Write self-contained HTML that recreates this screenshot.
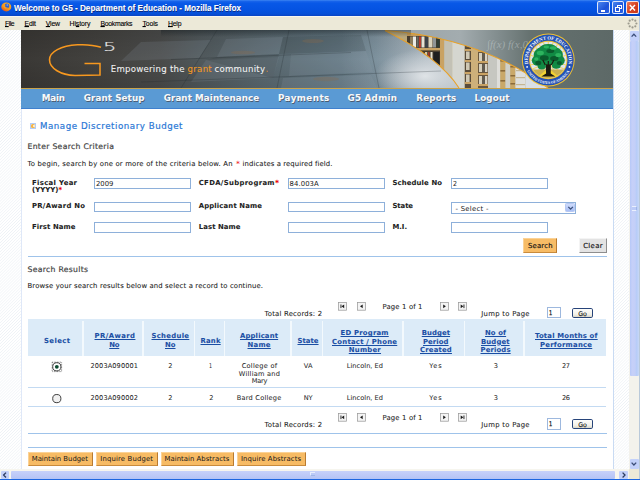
<!DOCTYPE html>
<html>
<head>
<meta charset="utf-8">
<title>Welcome to G5 - Department of Education</title>
<style>
html,body{margin:0;padding:0;}
body{width:640px;height:480px;overflow:hidden;position:relative;background:#fff;font-family:"DejaVu Sans","Liberation Sans",sans-serif;font-size:7px;color:#222;}
.a{position:absolute;box-sizing:border-box;}
.t{position:absolute;white-space:nowrap;line-height:1;color:#222;-webkit-text-stroke:0.08px currentColor;}
#titlebar{left:0;top:0;width:640px;height:16px;background:linear-gradient(#3d85f2 0,#1763ea 9%,#0858e7 20%,#0553e2 60%,#0650d8 85%,#0a45c4 100%);}
#menubar{left:0;top:15.5px;width:640px;height:14.5px;background:#ece9d8;border-top:0.5px solid #f8f6ee;}
#page{left:0;top:30px;width:630px;height:440px;background:#f8fafc repeating-linear-gradient(135deg,#ffffff 0,#ffffff 0.9px,#eef2f6 1.5px,#ffffff 2.1px);}
#content{left:20.5px;top:30px;width:593.5px;height:440px;background:#fff;border-left:1px solid #dfe8f8;border-right:1px solid #c9dbf3;}
#nav{left:21px;top:88.5px;width:592px;height:20.3px;background:#5a9ad4;border-bottom:1.2px solid #3f80ce;}
#gold{left:21px;top:87.6px;width:592px;height:1px;background:#c9a24a;}
.inp{position:absolute;box-sizing:border-box;border:1px solid #8fb0d8;background:#fff;}
.hl{position:absolute;height:1px;background:#a9c9ec;left:27.5px;width:579.5px;}
.wb{position:absolute;box-sizing:border-box;top:1.2px;height:13px;width:12.4px;border-radius:2px;border:0.8px solid rgba(255,255,255,.85);}
</style>
</head>
<body>
<div class="a" id="titlebar"></div>
<div class="a" id="menubar"></div>
<div class="a" id="page"></div>
<div class="a" id="content"></div>
<svg class="a" style="left:21px;top:30px" width="592" height="58" viewBox="0 0 592 58">
<defs>
<linearGradient id="bg1" x1="0" y1="0" x2="1" y2="0">
<stop offset="0" stop-color="#3a3835"/><stop offset="0.13" stop-color="#43423f"/><stop offset="0.235" stop-color="#4a4b4a"/><stop offset="0.30" stop-color="#50585b"/><stop offset="0.40" stop-color="#5a686f"/><stop offset="0.50" stop-color="#62757f"/><stop offset="0.60" stop-color="#6f8592"/><stop offset="0.66" stop-color="#8898a3"/><stop offset="0.71" stop-color="#a3aeb6"/><stop offset="1" stop-color="#a3aeb6"/>
</linearGradient>
<linearGradient id="bgv" x1="0" y1="0" x2="0" y2="1">
<stop offset="0" stop-color="#000" stop-opacity="0.12"/><stop offset="0.5" stop-color="#000" stop-opacity="0"/><stop offset="1" stop-color="#000" stop-opacity="0.1"/>
</linearGradient>
<linearGradient id="chalk" gradientUnits="userSpaceOnUse" x1="364" y1="0" x2="592" y2="0">
<stop offset="0" stop-color="#98a2a7"/><stop offset="0.33" stop-color="#a3acaf"/><stop offset="0.5" stop-color="#818c8d"/><stop offset="0.64" stop-color="#65716f"/><stop offset="1" stop-color="#5d6967"/></linearGradient>
<linearGradient id="sheen" gradientUnits="userSpaceOnUse" x1="320" y1="0" x2="445" y2="0"><stop offset="0" stop-color="#dfe5ea" stop-opacity="0"/><stop offset="0.6" stop-color="#dfe5ea" stop-opacity="0.28"/><stop offset="1" stop-color="#e6eaee" stop-opacity="0.5"/></linearGradient>
<radialGradient id="glow" cx="0.5" cy="0.5" r="0.5"><stop offset="0" stop-color="#e2e6e9" stop-opacity="0.95"/><stop offset="0.35" stop-color="#d8dde1" stop-opacity="0.7"/><stop offset="1" stop-color="#d5dade" stop-opacity="0"/></radialGradient>
<clipPath id="wedge"><path d="M364,0.5 Q419,28 438,58 L527,58 Q459,7.25 364,0.5 Z"/></clipPath>
</defs>
<rect width="592" height="58" fill="url(#bg1)"/>
<rect width="592" height="58" fill="url(#bgv)"/>
<rect x="320" y="0" width="130" height="58" fill="url(#sheen)"/>
<!-- chalkboard right -->
<path d="M364,0 L592,0 L592,58 L527,58 Q459,7.25 364,0.5 Z" fill="url(#chalk)"/>
<ellipse cx="404" cy="46" rx="50" ry="27" fill="url(#glow)"/>
<!-- wedge with shelves -->
<g clip-path="url(#wedge)">
<rect x="360" y="0" width="170" height="58" fill="#b9a77a"/>
<rect x="386" y="3" width="34" height="40" fill="#463c2e"/>
<rect x="389" y="6.5" width="3" height="11" fill="#8a7a5a"/>
<rect x="392" y="6.5" width="3" height="11" fill="#ecebe4"/>
<rect x="395.5" y="6.5" width="2" height="11" fill="#6a6a66"/>
<rect x="398" y="6.5" width="2" height="11" fill="#b5392a"/>
<rect x="400.5" y="6.5" width="3" height="11" fill="#e6e2d6"/>
<rect x="404" y="6.5" width="3" height="11" fill="#3d4148"/>
<rect x="407.5" y="6.5" width="4" height="11" fill="#d9d2bd"/>
<rect x="412" y="6.5" width="3" height="11" fill="#8f9496"/>
<rect x="415.5" y="6.5" width="3" height="11" fill="#2f3b34"/>
<rect x="386" y="3" width="34" height="3" fill="#c49a58"/>
<rect x="386" y="18" width="34" height="2.4" fill="#c9a263"/>
<rect x="398" y="22" width="5" height="13" fill="#2a2620"/>
<rect x="404" y="22" width="2.2" height="13" fill="#d9c9a0"/>
<rect x="407" y="22" width="1.6" height="13" fill="#a33a2a"/>
<rect x="409.5" y="22" width="2" height="13" fill="#e6e0cf"/>
<rect x="412.5" y="22" width="6" height="13" fill="#1f1f1f"/>
<rect x="419" y="6" width="4.2" height="52" fill="#c9a263"/>
<rect x="423.2" y="8" width="8" height="50" fill="#c3c1b5"/>
<rect x="431.2" y="9" width="12.6" height="49" fill="#d5d6d0"/>
<rect x="443.8" y="12" width="6.2" height="46" fill="#5a4c3a"/>
<rect x="443.8" y="19" width="6.2" height="2" fill="#c9a263"/>
<rect x="443.8" y="30" width="6.2" height="2" fill="#c9a263"/>
<rect x="443.8" y="42" width="6.2" height="2" fill="#c9a263"/>
<rect x="443.8" y="52" width="6.2" height="2" fill="#c9a263"/>
<rect x="445" y="21.5" width="3.6" height="7.5" fill="#cfc8b4"/>
<rect x="445" y="32.5" width="3.6" height="7.5" fill="#cfc8b4"/>
<rect x="445" y="44.5" width="3.6" height="7.5" fill="#cfc8b4"/>
<rect x="450" y="14" width="7" height="44" fill="#cdb07a"/>
<rect x="457" y="17" width="10" height="41" fill="#6a583f"/>
<rect x="457" y="20" width="10" height="2" fill="#c9a263"/>
<rect x="457" y="31" width="10" height="2" fill="#c9a263"/>
<rect x="457" y="43" width="10" height="2" fill="#c9a263"/>
<rect x="457" y="54" width="10" height="2" fill="#c9a263"/>
<rect x="458" y="23" width="3" height="8" fill="#d6d0bd"/>
<rect x="461.5" y="23" width="2" height="8" fill="#5e5c56"/>
<rect x="464" y="23" width="2.4" height="8" fill="#d9d3c4"/>
<rect x="458" y="34" width="3" height="8" fill="#d6d0bd"/>
<rect x="461.5" y="34" width="2" height="8" fill="#5e5c56"/>
<rect x="464" y="34" width="2.4" height="8" fill="#d9d3c4"/>
<rect x="458" y="46" width="3" height="8" fill="#d6d0bd"/>
<rect x="461.5" y="46" width="2" height="8" fill="#5e5c56"/>
<rect x="464" y="46" width="2.4" height="8" fill="#d9d3c4"/>
<rect x="467" y="20" width="9" height="38" fill="#c6c7c1"/>
<rect x="476" y="23" width="3.4" height="35" fill="#dededa"/>
<rect x="479.4" y="25" width="5" height="33" fill="#c9a869"/>
<rect x="479.4" y="30" width="5" height="1.6" fill="#8a6a3a"/>
<rect x="479.4" y="40" width="5" height="1.6" fill="#8a6a3a"/>
<rect x="479.4" y="50" width="5" height="1.6" fill="#8a6a3a"/>
<rect x="484.4" y="28" width="5" height="30" fill="#cfd0ca"/>
<rect x="489.4" y="31" width="5" height="27" fill="#c9a869"/>
<rect x="489.4" y="36" width="5" height="1.5" fill="#8a6a3a"/>
<rect x="489.4" y="45" width="5" height="1.5" fill="#8a6a3a"/>
<rect x="489.4" y="53" width="5" height="1.5" fill="#8a6a3a"/>
<rect x="494.4" y="34" width="10" height="24" fill="#dfe0de"/>
<rect x="495" y="40" width="9" height="1.2" fill="#c4b592"/>
<rect x="495" y="47" width="9" height="1.2" fill="#c4b592"/>
<rect x="495" y="54" width="9" height="1.2" fill="#c4b592"/>
<rect x="504.4" y="40" width="24" height="18" fill="#d9dfe6"/>
</g>
<path d="M364,0.5 Q419,28 438,58" fill="none" stroke="#e7a22c" stroke-width="1.1"/>
<path d="M364,0.5 Q459,7.25 527,58" fill="none" stroke="#e7a22c" stroke-width="1.1"/>
<!-- floor tile hints on dark left -->
<linearGradient id="topsh" x1="0" y1="0" x2="0" y2="1"><stop offset="0" stop-color="#10181c" stop-opacity="0.4"/><stop offset="1" stop-color="#10181c" stop-opacity="0"/></linearGradient>
<rect x="140" y="0" width="250" height="7" fill="url(#topsh)"/>
<g fill="#93a3ad" fill-opacity="0.16"><path d="M205,9 L262,7 L258,24 L196,27Z"/><path d="M270,24 L345,21 L352,42 L268,46Z"/><path d="M120,12 L190,10 L178,28 L100,31Z"/><path d="M185,30 L258,27 L252,48 L170,52Z"/><path d="M262,48 L350,45 L356,58 L260,58Z"/></g>
<g fill="#1c2226" fill-opacity="0.14"><path d="M262,7 L340,5 L345,21 L258,24Z"/><path d="M196,27 L258,24 L252,48 L185,30Z"/></g>
<g stroke="#20282c" stroke-opacity="0.28" stroke-width="0.9" fill="none">
<path d="M150,29.5 L330,22.5"/><path d="M120,52 L420,41"/><path d="M268,0 L256,58"/><path d="M346,0 L358,58"/><path d="M196,0 L160,58"/></g>
<g fill="#8a6a48" fill-opacity="0.3"><ellipse cx="292" cy="11" rx="11" ry="2"/><ellipse cx="222" cy="22.5" rx="12" ry="1.8"/><ellipse cx="305" cy="49" rx="13" ry="2.2"/></g>
<!-- G logo -->
<path d="M80,17.3 C72,14.7 64,14.4 56.5,14.8 C40,15.7 28.5,21.6 28.5,29.8 C28.5,38.5 40,45.1 54,45.5 L79,45.1 L79,33.5 L63.5,33.5" fill="none" stroke="#f7981f" stroke-width="1.55" stroke-linejoin="miter"/>
<!-- chalk scribbles -->
<text x="466" y="18" font-family="'Liberation Serif','DejaVu Serif',serif" font-style="italic" font-size="11" fill="#d0d8d8" fill-opacity="0.45">∫f(x) f(x,0)</text>
<!-- seal -->
<g transform="translate(527.3,30)">
<circle r="26.4" fill="#f0c030"/>
<circle r="25.4" fill="#2452b4"/>
<circle r="19.2" fill="#f0c030"/>
<circle r="18.2" fill="#dfe6ee"/>
<g stroke="#f3d25a" stroke-width="1.1" stroke-opacity="0.9"><path d="M0,2 L0.0,-18.0"/><path d="M0,2 L4.7,-17.4"/><path d="M0,2 L9.0,-15.6"/><path d="M0,2 L12.7,-12.7"/><path d="M0,2 L15.6,-9.0"/><path d="M0,2 L17.4,-4.7"/><path d="M0,2 L18.0,-0.0"/><path d="M0,2 L17.4,4.7"/><path d="M0,2 L15.6,9.0"/><path d="M0,2 L12.7,12.7"/><path d="M0,2 L9.0,15.6"/><path d="M0,2 L4.7,17.4"/><path d="M0,2 L0.0,18.0"/><path d="M0,2 L-4.7,17.4"/><path d="M0,2 L-9.0,15.6"/><path d="M0,2 L-12.7,12.7"/><path d="M0,2 L-15.6,9.0"/><path d="M0,2 L-17.4,4.7"/><path d="M0,2 L-18.0,0.0"/><path d="M0,2 L-17.4,-4.7"/><path d="M0,2 L-15.6,-9.0"/><path d="M0,2 L-12.7,-12.7"/><path d="M0,2 L-9.0,-15.6"/><path d="M0,2 L-4.7,-17.4"/></g>
<path d="M-15.5,9.5 A18.2,18.2 0 0 0 15.5,9.5 Z" fill="#c9b050"/>
<path d="M-10,16.4 L0,8 L10,16.4Z" fill="#f2d232"/>
<path d="M-7,16.6 L-2.2,13.6 L-2.6,5 L-6,0 L-3,-1 L0,3 L3,-2 L6,-1 L2.6,5 L2.4,13.6 L7,16.6Z" fill="#1c1a10"/>
<g fill="#118a44">
<ellipse cx="0" cy="-5" rx="14.6" ry="9.6"/><ellipse cx="-10.5" cy="0.5" rx="6" ry="5.2"/><ellipse cx="10.5" cy="0.5" rx="6" ry="5.2"/><ellipse cx="0" cy="-11" rx="9" ry="5"/><ellipse cx="-6.5" cy="6" rx="4.2" ry="3.4"/><ellipse cx="8" cy="5.6" rx="4.4" ry="3.2"/>
</g>
<g fill="#0a5a2c"><ellipse cx="-4" cy="-2" rx="4.4" ry="2.8"/><ellipse cx="6" cy="-1.5" rx="4.2" ry="2.6"/><ellipse cx="-10" cy="3" rx="3" ry="2.2"/><ellipse cx="2" cy="-9" rx="4" ry="2"/><ellipse cx="11" cy="3" rx="2.6" ry="2"/></g>
<g fill="#2db35e"><ellipse cx="-8" cy="-7" rx="3.6" ry="2.2"/><ellipse cx="5" cy="-12" rx="3.4" ry="1.8"/><ellipse cx="10" cy="-5" rx="3" ry="2"/><ellipse cx="-2" cy="-13" rx="2.8" ry="1.4"/><ellipse cx="-12" cy="-1" rx="2.2" ry="1.8"/></g>
<path d="M-3,5 L-5.5,0 M3,5 L5.6,0 M0,8 L0,1" stroke="#1c1a10" stroke-width="1.2" fill="none"/>
<path id="arcT" d="M-20.03,3.89 A20.4,20.4 0 1 1 20.03,3.89" fill="none"/>
<path id="arcB" d="M-21.38,10.90 A24.0,24.0 0 0 0 21.38,10.90" fill="none"/>
<text font-family="'Liberation Serif','DejaVu Serif',serif" font-size="5" font-weight="bold" fill="#fff"><textPath href="#arcT" textLength="71.4" lengthAdjust="spacingAndGlyphs">DEPARTMENT OF EDUCATION</textPath></text>
<text font-family="'Liberation Serif','DejaVu Serif',serif" font-size="3.9" font-weight="bold" fill="#fff"><textPath href="#arcB" textLength="52.3" lengthAdjust="spacingAndGlyphs">UNITED STATES OF AMERICA</textPath></text>
<circle cx="-21.2" cy="6.9" r="0.9" fill="#fff"/><circle cx="21.2" cy="6.9" r="0.9" fill="#fff"/>
</g>
</svg>

<div class="a" id="gold"></div>
<div class="a" id="nav"></div>
<div class="a" style="left:29.9px;top:123px;width:6.00px;height:6.00px;border:0.8px solid #b4cdf5;background:#dbe7fb;"><div class="a" style="left:0.1px;top:0.1px;width:4.2px;height:4.2px;border-radius:1.6px;background:#f7b443"></div><div class="a" style="left:1.9px;top:1.2px;width:1.8px;height:2px;border-radius:0.8px;background:#fff6dc"></div></div>
<div class="a" style="left:94px;top:178px;width:96.60px;height:10.80px;border:1px solid #8eb0da;background:#fff;"></div>
<div class="a" style="left:94px;top:202px;width:96.60px;height:10.40px;border:1px solid #8eb0da;background:#fff;"></div>
<div class="a" style="left:94px;top:222.4px;width:96.60px;height:10.40px;border:1px solid #8eb0da;background:#fff;"></div>
<div class="a" style="left:288px;top:178px;width:96.60px;height:10.80px;border:1px solid #8eb0da;background:#fff;"></div>
<div class="a" style="left:288px;top:202px;width:96.60px;height:10.40px;border:1px solid #8eb0da;background:#fff;"></div>
<div class="a" style="left:288px;top:222.4px;width:96.60px;height:10.40px;border:1px solid #8eb0da;background:#fff;"></div>
<div class="a" style="left:451px;top:178px;width:96.60px;height:10.80px;border:1px solid #8eb0da;background:#fff;"></div>
<div class="a" style="left:451px;top:222.4px;width:96.60px;height:10.40px;border:1px solid #8eb0da;background:#fff;"></div>
<div class="a" style="left:451px;top:202px;width:125.00px;height:11.70px;border:1px solid #8eb0da;background:#fff;"></div>
<div class="a" style="left:565.2px;top:203.4px;width:9.40px;height:8.40px;border-radius:1.2px;background:linear-gradient(#cfdcfb,#a9bff5);border:0.5px solid #b6c8f3;"><svg class="a" style="left:0;top:0" width="9.4" height="8.6" viewBox="0 0 9.4 8.6"><path d="M2.3,2.9 L4.6,5.2 L6.9,2.9" fill="none" stroke="#3a4f7a" stroke-width="1.3"/></svg></div>
<div class="a" style="left:523.2px;top:238px;width:33.80px;height:14.50px;background:#f7bc66;border-right:1px solid #b87a30;border-bottom:1px solid #c98b3c;border-top:0.5px solid #fbd296;border-left:0.5px solid #fbd296;"></div>
<div class="a" style="left:579.25px;top:238px;width:27.75px;height:14.50px;background:#e3e3e3;border-right:1px solid #8e8e8e;border-bottom:1px solid #8e8e8e;border-top:0.5px solid #f4f4f4;border-left:0.5px solid #f4f4f4;"></div>
<div class="a" style="left:27.5px;top:255.8px;width:579.50px;height:1.00px;background:#9fc3ea;"></div>
<div class="a" style="left:27.5px;top:432.6px;width:579.50px;height:1.00px;background:#9fc3ea;"></div>
<div class="a" style="left:27.5px;top:446.8px;width:579.50px;height:1.00px;background:#9fc3ea;"></div>
<div class="a" style="left:27.5px;top:318.75px;width:578.25px;height:37.25px;background:#dcebf8;"></div>
<div class="a" style="left:82.15px;top:320.6px;width:1.70px;height:35.40px;background:#f3f9fd;"></div>
<div class="a" style="left:142.15px;top:320.6px;width:1.70px;height:35.40px;background:#f3f9fd;"></div>
<div class="a" style="left:193.65px;top:320.6px;width:1.70px;height:35.40px;background:#f3f9fd;"></div>
<div class="a" style="left:223.65px;top:320.6px;width:1.70px;height:35.40px;background:#f3f9fd;"></div>
<div class="a" style="left:290.15px;top:320.6px;width:1.70px;height:35.40px;background:#f3f9fd;"></div>
<div class="a" style="left:321.65px;top:320.6px;width:1.70px;height:35.40px;background:#f3f9fd;"></div>
<div class="a" style="left:402.15px;top:320.6px;width:1.70px;height:35.40px;background:#f3f9fd;"></div>
<div class="a" style="left:463.65px;top:320.6px;width:1.70px;height:35.40px;background:#f3f9fd;"></div>
<div class="a" style="left:522.9px;top:320.6px;width:1.70px;height:35.40px;background:#f3f9fd;"></div>
<div class="a" style="left:27.5px;top:387px;width:578.50px;height:0.90px;background:#c3daf2;"></div>
<div class="a" style="left:27.5px;top:406px;width:578.50px;height:0.90px;background:#c3daf2;"></div>
<svg class="a" style="left:50px;top:360px" width="14" height="46" viewBox="0 0 14 46"><rect x="2.2" y="2.2" width="9.4" height="9.4" fill="none" stroke="#444" stroke-width="0.7" stroke-dasharray="0.8 0.8"/><circle cx="6.8" cy="6.8" r="4.1" fill="#fff" stroke="#2a2a2a" stroke-width="0.9"/><circle cx="6.8" cy="6.8" r="1.9" fill="#0c4a30"/><circle cx="6.8" cy="38.6" r="4.1" fill="#f1f1f1" stroke="#2a2a2a" stroke-width="0.9"/></svg>
<svg class="a" style="left:338.2px;top:302.1px" width="8.8" height="8.6" viewBox="0 0 8.8 8.6"><rect x="0.4" y="0.4" width="8" height="7.8" fill="#f4f4f4" stroke="#9a9a9a" stroke-width="0.75"/><g fill="#1a1a1a"><rect x="2.5" y="2.5" width="0.9" height="3.6"/><path d="M6.2,2.4v3.8L3.5,4.3Z"/></g></svg>
<svg class="a" style="left:357px;top:302.1px" width="8.8" height="8.6" viewBox="0 0 8.8 8.6"><rect x="0.4" y="0.4" width="8" height="7.8" fill="#f4f4f4" stroke="#9a9a9a" stroke-width="0.75"/><g fill="#1a1a1a"><path d="M5.7,2.4v3.8L3,4.3Z"/></g></svg>
<svg class="a" style="left:440px;top:302.1px" width="8.8" height="8.6" viewBox="0 0 8.8 8.6"><rect x="0.4" y="0.4" width="8" height="7.8" fill="#f4f4f4" stroke="#9a9a9a" stroke-width="0.75"/><g fill="#1a1a1a"><path d="M3.2,2.4v3.8L5.9,4.3Z"/></g></svg>
<svg class="a" style="left:458.3px;top:302.1px" width="8.8" height="8.6" viewBox="0 0 8.8 8.6"><rect x="0.4" y="0.4" width="8" height="7.8" fill="#f4f4f4" stroke="#9a9a9a" stroke-width="0.75"/><g fill="#1a1a1a"><rect x="5.5" y="2.5" width="0.9" height="3.6"/><path d="M2.7,2.4v3.8L5.4,4.3Z"/></g></svg>
<div class="a" style="left:547px;top:307.1px;width:14.00px;height:11.40px;border:1px solid #9db8de;background:#fff;"></div>
<div class="a" style="left:572px;top:308.20000000000005px;width:20.90px;height:9.80px;border:0.9px solid #27447a;border-radius:1.8px;background:linear-gradient(#fdfdfb,#f3f2ea 65%,#dcd8c8);"></div>
<svg class="a" style="left:338.2px;top:413.3px" width="8.8" height="8.6" viewBox="0 0 8.8 8.6"><rect x="0.4" y="0.4" width="8" height="7.8" fill="#f4f4f4" stroke="#9a9a9a" stroke-width="0.75"/><g fill="#1a1a1a"><rect x="2.5" y="2.5" width="0.9" height="3.6"/><path d="M6.2,2.4v3.8L3.5,4.3Z"/></g></svg>
<svg class="a" style="left:357px;top:413.3px" width="8.8" height="8.6" viewBox="0 0 8.8 8.6"><rect x="0.4" y="0.4" width="8" height="7.8" fill="#f4f4f4" stroke="#9a9a9a" stroke-width="0.75"/><g fill="#1a1a1a"><path d="M5.7,2.4v3.8L3,4.3Z"/></g></svg>
<svg class="a" style="left:440px;top:413.3px" width="8.8" height="8.6" viewBox="0 0 8.8 8.6"><rect x="0.4" y="0.4" width="8" height="7.8" fill="#f4f4f4" stroke="#9a9a9a" stroke-width="0.75"/><g fill="#1a1a1a"><path d="M3.2,2.4v3.8L5.9,4.3Z"/></g></svg>
<svg class="a" style="left:458.3px;top:413.3px" width="8.8" height="8.6" viewBox="0 0 8.8 8.6"><rect x="0.4" y="0.4" width="8" height="7.8" fill="#f4f4f4" stroke="#9a9a9a" stroke-width="0.75"/><g fill="#1a1a1a"><rect x="5.5" y="2.5" width="0.9" height="3.6"/><path d="M2.7,2.4v3.8L5.4,4.3Z"/></g></svg>
<div class="a" style="left:547px;top:418.3px;width:14.00px;height:11.40px;border:1px solid #9db8de;background:#fff;"></div>
<div class="a" style="left:572px;top:419.40000000000003px;width:20.90px;height:9.80px;border:0.9px solid #27447a;border-radius:1.8px;background:linear-gradient(#fdfdfb,#f3f2ea 65%,#dcd8c8);"></div>
<div class="a" style="left:27.75px;top:452px;width:64.75px;height:13.60px;background:#f7bb64;border-right:1px solid #b87a30;border-bottom:1px solid #c98b3c;border-top:0.5px solid #fbd296;border-left:0.5px solid #fbd296;"></div>
<div class="a" style="left:96.25px;top:452px;width:61.25px;height:13.60px;background:#f7bb64;border-right:1px solid #b87a30;border-bottom:1px solid #c98b3c;border-top:0.5px solid #fbd296;border-left:0.5px solid #fbd296;"></div>
<div class="a" style="left:160.5px;top:452px;width:73.25px;height:13.60px;background:#f7bb64;border-right:1px solid #b87a30;border-bottom:1px solid #c98b3c;border-top:0.5px solid #fbd296;border-left:0.5px solid #fbd296;"></div>
<div class="a" style="left:237px;top:452px;width:68.50px;height:13.60px;background:#f7bb64;border-right:1px solid #b87a30;border-bottom:1px solid #c98b3c;border-top:0.5px solid #fbd296;border-left:0.5px solid #fbd296;"></div>
<span class="t" style="left:13.90px;top:5.10px;font-size:8.2px;font-family:'Liberation Sans','DejaVu Sans',sans-serif;font-weight:bold;color:#fff;letter-spacing:-0.012px;transform-origin:0 6.00px;transform:scaleY(1.12);text-shadow:0.6px 0.6px 0 #0a2a80;">Welcome to G5 - Department of Education - Mozilla Firefox</span>
<span class="t" style="left:5.00px;top:21.30px;font-size:6.9px;font-family:'Liberation Sans','DejaVu Sans',sans-serif;color:#000;letter-spacing:-0.536px;transform-origin:0 5.00px;transform:scaleY(1.1);-webkit-text-stroke:0.1px #000;"><u style="text-decoration-thickness:0.6px;text-underline-offset:0.1px">F</u>ile</span>
<span class="t" style="left:24.50px;top:21.30px;font-size:6.9px;font-family:'Liberation Sans','DejaVu Sans',sans-serif;color:#000;letter-spacing:-0.125px;transform-origin:0 5.00px;transform:scaleY(1.1);-webkit-text-stroke:0.1px #000;"><u style="text-decoration-thickness:0.6px;text-underline-offset:0.1px">E</u>dit</span>
<span class="t" style="left:45.80px;top:21.30px;font-size:6.9px;font-family:'Liberation Sans','DejaVu Sans',sans-serif;color:#000;letter-spacing:-0.204px;transform-origin:0 5.00px;transform:scaleY(1.1);-webkit-text-stroke:0.1px #000;"><u style="text-decoration-thickness:0.6px;text-underline-offset:0.1px">V</u>iew</span>
<span class="t" style="left:69.50px;top:21.30px;font-size:6.9px;font-family:'Liberation Sans','DejaVu Sans',sans-serif;color:#000;letter-spacing:-0.076px;transform-origin:0 5.00px;transform:scaleY(1.1);-webkit-text-stroke:0.1px #000;">Hi<u style="text-decoration-thickness:0.6px;text-underline-offset:0.1px">s</u>tory</span>
<span class="t" style="left:100.50px;top:21.30px;font-size:6.9px;font-family:'Liberation Sans','DejaVu Sans',sans-serif;color:#000;letter-spacing:-0.309px;transform-origin:0 5.00px;transform:scaleY(1.1);-webkit-text-stroke:0.1px #000;"><u style="text-decoration-thickness:0.6px;text-underline-offset:0.1px">B</u>ookmarks</span>
<span class="t" style="left:142.50px;top:21.30px;font-size:6.9px;font-family:'Liberation Sans','DejaVu Sans',sans-serif;color:#000;letter-spacing:-0.148px;transform-origin:0 5.00px;transform:scaleY(1.1);-webkit-text-stroke:0.1px #000;"><u style="text-decoration-thickness:0.6px;text-underline-offset:0.1px">T</u>ools</span>
<span class="t" style="left:168.00px;top:21.30px;font-size:6.9px;font-family:'Liberation Sans','DejaVu Sans',sans-serif;color:#000;letter-spacing:-0.224px;transform-origin:0 5.00px;transform:scaleY(1.1);-webkit-text-stroke:0.1px #000;"><u style="text-decoration-thickness:0.6px;text-underline-offset:0.1px">H</u>elp</span>
<span class="t" style="left:110.75px;top:65.25px;font-size:8.6px;color:#f2f2f2;letter-spacing:0.250px;-webkit-text-stroke:0.08px #f2f2f2;">Empowering the</span>
<span class="t" style="left:187.50px;top:65.25px;font-size:8.6px;color:#f59a23;letter-spacing:0.293px;-webkit-text-stroke:0.08px #f59a23;">grant</span>
<span class="t" style="left:214.50px;top:65.25px;font-size:8.6px;color:#f2f2f2;letter-spacing:0.254px;-webkit-text-stroke:0.08px #f2f2f2;">community</span>
<span class="t" style="left:265.80px;top:65.25px;font-size:8.6px;color:#f59a23;transform-origin:0 0;transform:scaleX(0.658);-webkit-text-stroke:0.08px #f59a23;">.</span>
<span class="t" style="left:102.60px;top:42.30px;font-size:11.4px;font-family:'DejaVu Sans Light','DejaVu Sans',sans-serif;font-weight:200;color:#e6e6e6;-webkit-text-stroke:0.15px #e6e6e6;transform-origin:0 0;transform:scaleX(1.85);">5</span>
<span class="t" style="left:41.75px;top:93.75px;font-size:8.75px;font-weight:bold;color:#f6f9fc;letter-spacing:-0.198px;text-shadow:0.7px 0.7px 0.4px #4a5a70;">Main</span>
<span class="t" style="left:83.75px;top:93.75px;font-size:8.75px;font-weight:bold;color:#f6f9fc;letter-spacing:0.097px;text-shadow:0.7px 0.7px 0.4px #4a5a70;">Grant Setup</span>
<span class="t" style="left:163.75px;top:93.75px;font-size:8.75px;font-weight:bold;color:#f6f9fc;letter-spacing:0.074px;text-shadow:0.7px 0.7px 0.4px #4a5a70;">Grant Maintenance</span>
<span class="t" style="left:278.00px;top:93.75px;font-size:8.75px;font-weight:bold;color:#f6f9fc;letter-spacing:0.435px;text-shadow:0.7px 0.7px 0.4px #4a5a70;">Payments</span>
<span class="t" style="left:347.50px;top:93.75px;font-size:8.75px;font-weight:bold;color:#f6f9fc;letter-spacing:0.257px;text-shadow:0.7px 0.7px 0.4px #4a5a70;">G5 Admin</span>
<span class="t" style="left:416.25px;top:93.75px;font-size:8.75px;font-weight:bold;color:#f6f9fc;letter-spacing:0.224px;text-shadow:0.7px 0.7px 0.4px #4a5a70;">Reports</span>
<span class="t" style="left:474.50px;top:93.75px;font-size:8.75px;font-weight:bold;color:#f6f9fc;letter-spacing:0.144px;text-shadow:0.7px 0.7px 0.4px #4a5a70;">Logout</span>
<span class="t" style="left:40.00px;top:122.40px;font-size:8.7px;color:#2b78d6;letter-spacing:0.516px;-webkit-text-stroke:0.2px #2b78d6;">Manage Discretionary Budget</span>
<span class="t" style="left:27.50px;top:143.40px;font-size:7.7px;color:#444;letter-spacing:0.307px;-webkit-text-stroke:0.2px #444;">Enter Search Criteria</span>
<span class="t" style="left:27.50px;top:160.50px;font-size:6.875px;letter-spacing:0.189px;">To begin, search by one or more of the criteria below. An</span>
<span class="t" style="left:236.30px;top:160.50px;font-size:6.875px;color:#e00;transform-origin:0 0;transform:scaleX(1.164);">*</span>
<span class="t" style="left:242.60px;top:160.50px;font-size:6.875px;letter-spacing:0.095px;">indicates a required field.</span>
<span class="t" style="left:32.00px;top:179.50px;font-size:6.875px;font-weight:bold;letter-spacing:0.344px;">Fiscal Year</span>
<span class="t" style="left:32.00px;top:187.00px;font-size:6.875px;font-weight:bold;letter-spacing:0.072px;">(YYYY)</span>
<span class="t" style="left:58.50px;top:187.00px;font-size:6.875px;font-weight:bold;color:#e00;">*</span>
<span class="t" style="left:32.00px;top:203.00px;font-size:6.875px;font-weight:bold;letter-spacing:0.277px;">PR/Award No</span>
<span class="t" style="left:32.00px;top:223.75px;font-size:6.875px;font-weight:bold;letter-spacing:0.128px;">First Name</span>
<span class="t" style="left:198.75px;top:179.50px;font-size:6.875px;font-weight:bold;letter-spacing:0.336px;">CFDA/Subprogram</span>
<span class="t" style="left:274.70px;top:179.50px;font-size:6.875px;font-weight:bold;color:#e00;transform-origin:0 0;transform:scaleX(1.127);">*</span>
<span class="t" style="left:198.75px;top:203.00px;font-size:6.875px;font-weight:bold;letter-spacing:0.154px;">Applicant Name</span>
<span class="t" style="left:198.75px;top:223.75px;font-size:6.875px;font-weight:bold;letter-spacing:0.104px;">Last Name</span>
<span class="t" style="left:392.50px;top:179.50px;font-size:6.875px;font-weight:bold;letter-spacing:0.131px;">Schedule No</span>
<span class="t" style="left:392.50px;top:203.00px;font-size:6.875px;font-weight:bold;letter-spacing:-0.070px;">State</span>
<span class="t" style="left:392.50px;top:223.75px;font-size:6.875px;font-weight:bold;letter-spacing:-0.031px;">M.I.</span>
<span class="t" style="left:96.00px;top:180.75px;font-size:6.875px;letter-spacing:0.010px;-webkit-text-stroke:0;">2009</span>
<span class="t" style="left:289.50px;top:180.75px;font-size:6.875px;letter-spacing:0.091px;-webkit-text-stroke:0;">84.003A</span>
<span class="t" style="left:453.00px;top:180.75px;font-size:6.875px;transform-origin:0 0;transform:scaleX(0.914);-webkit-text-stroke:0;">2</span>
<span class="t" style="left:455.50px;top:205.50px;font-size:6.875px;letter-spacing:0.280px;-webkit-text-stroke:0;">- Select -</span>
<span class="t" style="left:528.00px;top:243.00px;font-size:6.875px;color:#111;letter-spacing:0.184px;-webkit-text-stroke:0.15px #111;">Search</span>
<span class="t" style="left:583.25px;top:243.00px;font-size:6.875px;color:#111;letter-spacing:0.324px;-webkit-text-stroke:0.15px #111;">Clear</span>
<span class="t" style="left:27.50px;top:265.75px;font-size:7.7px;color:#444;letter-spacing:0.298px;-webkit-text-stroke:0.2px #444;">Search Results</span>
<span class="t" style="left:27.50px;top:283.00px;font-size:6.875px;letter-spacing:0.140px;">Browse your search results below and select a record to continue.</span>
<span class="t" style="left:264.50px;top:310.75px;font-size:6.875px;letter-spacing:0.211px;">Total Records: 2</span>
<span class="t" style="left:382.50px;top:303.75px;font-size:6.875px;letter-spacing:0.150px;">Page 1 of 1</span>
<span class="t" style="left:481.25px;top:310.75px;font-size:6.875px;letter-spacing:0.280px;">Jump to Page</span>
<span class="t" style="left:549.00px;top:310.10px;font-size:6.4px;color:#111;transform-origin:0 0;transform:scaleX(0.785);-webkit-text-stroke:0.25px #111;">1</span>
<span class="t" style="left:578.30px;top:310.80px;font-size:6.3px;color:#111;letter-spacing:-0.134px;-webkit-text-stroke:0.1px #111;">Go</span>
<span class="t" style="left:264.50px;top:421.75px;font-size:6.875px;letter-spacing:0.211px;">Total Records: 2</span>
<span class="t" style="left:382.50px;top:415.00px;font-size:6.875px;letter-spacing:0.150px;">Page 1 of 1</span>
<span class="t" style="left:481.25px;top:421.75px;font-size:6.875px;letter-spacing:0.280px;">Jump to Page</span>
<span class="t" style="left:549.00px;top:421.10px;font-size:6.4px;color:#111;transform-origin:0 0;transform:scaleX(0.785);-webkit-text-stroke:0.25px #111;">1</span>
<span class="t" style="left:578.30px;top:421.80px;font-size:6.3px;color:#111;letter-spacing:-0.134px;-webkit-text-stroke:0.1px #111;">Go</span>
<span class="t" style="left:44.00px;top:337.90px;font-size:6.875px;font-weight:bold;color:#1a4ea4;letter-spacing:0.409px;">Select</span>
<span class="t" style="left:94.50px;top:333.40px;font-size:6.875px;font-weight:bold;color:#1a4ea4;letter-spacing:0.444px;text-decoration:underline;text-decoration-thickness:0.7px;text-underline-offset:0.6px;">PR/Award</span>
<span class="t" style="left:109.25px;top:341.65px;font-size:6.875px;font-weight:bold;color:#1a4ea4;letter-spacing:-0.219px;text-decoration:underline;text-decoration-thickness:0.7px;text-underline-offset:0.6px;">No</span>
<span class="t" style="left:151.50px;top:333.40px;font-size:6.875px;font-weight:bold;color:#1a4ea4;letter-spacing:0.308px;text-decoration:underline;text-decoration-thickness:0.7px;text-underline-offset:0.6px;">Schedule</span>
<span class="t" style="left:165.00px;top:341.65px;font-size:6.875px;font-weight:bold;color:#1a4ea4;letter-spacing:0.031px;text-decoration:underline;text-decoration-thickness:0.7px;text-underline-offset:0.6px;">No</span>
<span class="t" style="left:200.50px;top:337.90px;font-size:6.875px;font-weight:bold;color:#1a4ea4;letter-spacing:0.214px;text-decoration:underline;text-decoration-thickness:0.7px;text-underline-offset:0.6px;">Rank</span>
<span class="t" style="left:240.00px;top:333.40px;font-size:6.875px;font-weight:bold;color:#1a4ea4;letter-spacing:0.162px;text-decoration:underline;text-decoration-thickness:0.7px;text-underline-offset:0.6px;">Applicant</span>
<span class="t" style="left:247.50px;top:341.65px;font-size:6.875px;font-weight:bold;color:#1a4ea4;letter-spacing:0.276px;text-decoration:underline;text-decoration-thickness:0.7px;text-underline-offset:0.6px;">Name</span>
<span class="t" style="left:297.50px;top:337.90px;font-size:6.875px;font-weight:bold;color:#1a4ea4;letter-spacing:0.055px;text-decoration:underline;text-decoration-thickness:0.7px;text-underline-offset:0.6px;">State</span>
<span class="t" style="left:340.50px;top:330.40px;font-size:6.875px;font-weight:bold;color:#1a4ea4;letter-spacing:0.226px;text-decoration:underline;text-decoration-thickness:0.7px;text-underline-offset:0.6px;">ED Program</span>
<span class="t" style="left:332.00px;top:338.50px;font-size:6.875px;font-weight:bold;color:#1a4ea4;letter-spacing:0.262px;text-decoration:underline;text-decoration-thickness:0.7px;text-underline-offset:0.6px;">Contact / Phone</span>
<span class="t" style="left:348.75px;top:346.65px;font-size:6.875px;font-weight:bold;color:#1a4ea4;letter-spacing:0.256px;text-decoration:underline;text-decoration-thickness:0.7px;text-underline-offset:0.6px;">Number</span>
<span class="t" style="left:421.75px;top:330.40px;font-size:6.875px;font-weight:bold;color:#1a4ea4;letter-spacing:0.075px;text-decoration:underline;text-decoration-thickness:0.7px;text-underline-offset:0.6px;">Budget</span>
<span class="t" style="left:423.00px;top:338.50px;font-size:6.875px;font-weight:bold;color:#1a4ea4;letter-spacing:0.091px;text-decoration:underline;text-decoration-thickness:0.7px;text-underline-offset:0.6px;">Period</span>
<span class="t" style="left:420.00px;top:346.65px;font-size:6.875px;font-weight:bold;color:#1a4ea4;letter-spacing:0.201px;text-decoration:underline;text-decoration-thickness:0.7px;text-underline-offset:0.6px;">Created</span>
<span class="t" style="left:485.00px;top:330.40px;font-size:6.875px;font-weight:bold;color:#1a4ea4;letter-spacing:0.113px;text-decoration:underline;text-decoration-thickness:0.7px;text-underline-offset:0.6px;">No of</span>
<span class="t" style="left:481.00px;top:338.50px;font-size:6.875px;font-weight:bold;color:#1a4ea4;letter-spacing:0.125px;text-decoration:underline;text-decoration-thickness:0.7px;text-underline-offset:0.6px;">Budget</span>
<span class="t" style="left:480.50px;top:346.65px;font-size:6.875px;font-weight:bold;color:#1a4ea4;letter-spacing:0.146px;text-decoration:underline;text-decoration-thickness:0.7px;text-underline-offset:0.6px;">Periods</span>
<span class="t" style="left:535.00px;top:333.40px;font-size:6.875px;font-weight:bold;color:#1a4ea4;letter-spacing:0.186px;text-decoration:underline;text-decoration-thickness:0.7px;text-underline-offset:0.6px;">Total Months of</span>
<span class="t" style="left:540.00px;top:341.65px;font-size:6.875px;font-weight:bold;color:#1a4ea4;letter-spacing:0.247px;text-decoration:underline;text-decoration-thickness:0.7px;text-underline-offset:0.6px;">Performance</span>
<span class="t" style="left:90.50px;top:363.00px;font-size:6.6px;color:#2a2a2a;letter-spacing:0.103px;-webkit-text-stroke:0.05px #2a2a2a;">2003A090001</span>
<span class="t" style="left:168.25px;top:363.00px;font-size:6.6px;color:#2a2a2a;-webkit-text-stroke:0.05px #2a2a2a;">2</span>
<span class="t" style="left:209.25px;top:363.00px;font-size:6.6px;color:#2a2a2a;transform-origin:0 0;transform:scaleX(0.726);-webkit-text-stroke:0.05px #2a2a2a;">1</span>
<span class="t" style="left:241.75px;top:363.00px;font-size:6.6px;color:#2a2a2a;letter-spacing:0.243px;-webkit-text-stroke:0.05px #2a2a2a;">College of</span>
<span class="t" style="left:238.75px;top:370.80px;font-size:6.6px;color:#2a2a2a;letter-spacing:0.258px;-webkit-text-stroke:0.05px #2a2a2a;">William and</span>
<span class="t" style="left:251.75px;top:378.20px;font-size:6.6px;color:#2a2a2a;letter-spacing:-0.198px;-webkit-text-stroke:0.05px #2a2a2a;">Mary</span>
<span class="t" style="left:303.75px;top:363.00px;font-size:6.6px;color:#2a2a2a;letter-spacing:0.141px;-webkit-text-stroke:0.05px #2a2a2a;">VA</span>
<span class="t" style="left:346.75px;top:363.00px;font-size:6.6px;color:#2a2a2a;letter-spacing:0.034px;-webkit-text-stroke:0.05px #2a2a2a;">Lincoln, Ed</span>
<span class="t" style="left:429.25px;top:363.00px;font-size:6.6px;color:#2a2a2a;letter-spacing:0.922px;-webkit-text-stroke:0.05px #2a2a2a;">Yes</span>
<span class="t" style="left:493.75px;top:363.00px;font-size:6.6px;color:#2a2a2a;-webkit-text-stroke:0.05px #2a2a2a;">3</span>
<span class="t" style="left:562.00px;top:363.00px;font-size:6.6px;color:#2a2a2a;letter-spacing:-0.391px;-webkit-text-stroke:0.05px #2a2a2a;">27</span>
<span class="t" style="left:90.50px;top:395.00px;font-size:6.6px;color:#2a2a2a;letter-spacing:0.103px;-webkit-text-stroke:0.05px #2a2a2a;">2003A090002</span>
<span class="t" style="left:168.25px;top:395.00px;font-size:6.6px;color:#2a2a2a;-webkit-text-stroke:0.05px #2a2a2a;">2</span>
<span class="t" style="left:209.25px;top:395.00px;font-size:6.6px;color:#2a2a2a;-webkit-text-stroke:0.05px #2a2a2a;">2</span>
<span class="t" style="left:236.75px;top:395.00px;font-size:6.6px;color:#2a2a2a;letter-spacing:0.223px;-webkit-text-stroke:0.05px #2a2a2a;">Bard College</span>
<span class="t" style="left:303.75px;top:395.00px;font-size:6.6px;color:#2a2a2a;letter-spacing:-0.219px;-webkit-text-stroke:0.05px #2a2a2a;">NY</span>
<span class="t" style="left:346.75px;top:395.00px;font-size:6.6px;color:#2a2a2a;letter-spacing:0.034px;-webkit-text-stroke:0.05px #2a2a2a;">Lincoln, Ed</span>
<span class="t" style="left:429.25px;top:395.00px;font-size:6.6px;color:#2a2a2a;letter-spacing:0.922px;-webkit-text-stroke:0.05px #2a2a2a;">Yes</span>
<span class="t" style="left:493.75px;top:395.00px;font-size:6.6px;color:#2a2a2a;-webkit-text-stroke:0.05px #2a2a2a;">3</span>
<span class="t" style="left:562.00px;top:395.00px;font-size:6.6px;color:#2a2a2a;letter-spacing:-0.391px;-webkit-text-stroke:0.05px #2a2a2a;">26</span>
<span class="t" style="left:31.75px;top:456.00px;font-size:6.875px;color:#1a1a1a;letter-spacing:-0.009px;-webkit-text-stroke:0.03px #1a1a1a;">Maintain Budget</span>
<span class="t" style="left:100.25px;top:456.00px;font-size:6.875px;color:#1a1a1a;letter-spacing:0.156px;-webkit-text-stroke:0.03px #1a1a1a;">Inquire Budget</span>
<span class="t" style="left:164.50px;top:456.00px;font-size:6.875px;color:#1a1a1a;letter-spacing:0.040px;-webkit-text-stroke:0.03px #1a1a1a;">Maintain Abstracts</span>
<span class="t" style="left:241.00px;top:456.00px;font-size:6.875px;color:#1a1a1a;letter-spacing:0.099px;-webkit-text-stroke:0.03px #1a1a1a;">Inquire Abstracts</span>
<!-- firefox icon -->
<svg class="a" style="left:1px;top:2.4px" width="10.6" height="9.6" viewBox="0 0 10.6 9.6"><defs><linearGradient id="fx" x1="0.8" y1="0" x2="0.2" y2="1"><stop offset="0" stop-color="#f7b12a"/><stop offset="0.6" stop-color="#f4941c"/><stop offset="1" stop-color="#dc4a18"/></linearGradient></defs><ellipse cx="5.3" cy="4.9" rx="5" ry="4.5" fill="url(#fx)"/><circle cx="6" cy="3.9" r="2.3" fill="#2a5fd0"/><circle cx="6.4" cy="3.1" r="1" fill="#6a9ae8"/><path d="M3.2,1.6 C4.2,2.6 4.6,3.6 4.2,4.8 C4.8,5.6 6,5.8 7,5.4 C6.2,6.6 4.4,6.8 3.2,6 C2.2,5 2.2,3 3.2,1.6Z" fill="#f59f20"/></svg>
<!-- window buttons -->
<div class="wb" style="left:597.2px;background:linear-gradient(135deg,#4a86ef,#1d52d8 60%,#2a62e4);"><div class="a" style="left:2.4px;top:7.8px;width:4.4px;height:1.7px;background:#fff"></div></div>
<div class="wb" style="left:611.8px;background:linear-gradient(135deg,#4a86ef,#1d52d8 60%,#2a62e4);"><div class="a" style="left:4.2px;top:2.4px;width:5px;height:4.4px;border:0.9px solid #fff;border-top-width:1.4px"></div><div class="a" style="left:2.2px;top:4.8px;width:5px;height:4.6px;border:0.9px solid #fff;border-top-width:1.4px;background:#2458dc"></div></div>
<div class="wb" style="left:626.2px;background:linear-gradient(135deg,#e8795a,#d6401f 55%,#c9381c);"><svg class="a" style="left:0;top:0" width="11" height="11.4" viewBox="0 0 11 11.4"><path d="M2.8,2.9 L8,8.5 M8,2.9 L2.8,8.5" stroke="#fff" stroke-width="1.5" fill="none"/></svg></div>
<!-- throbber -->
<svg class="a" style="left:626.5px;top:17.6px" width="11" height="11" viewBox="0 0 11 11"><g fill="#9c9a8e"><circle cx="5.5" cy="1.6" r="1.1"/><circle cx="8.3" cy="2.7" r="1.1"/><circle cx="9.4" cy="5.5" r="1.1"/><circle cx="8.3" cy="8.3" r="1.1"/><circle cx="5.5" cy="9.4" r="1.1"/><circle cx="2.7" cy="8.3" r="1.1"/><circle cx="1.6" cy="5.5" r="1.1"/><circle cx="2.7" cy="2.7" r="1.1"/></g></svg>
<!-- vertical scrollbar -->
<div class="a" style="left:629.4px;top:30px;width:9.4px;height:439.6px;background:#f3f2ec;"></div>
<div class="a" style="left:630.3px;top:40.8px;width:8.5px;height:335px;background:linear-gradient(90deg,#b6c8f8,#c6d0f8 25%,#c3cff8 55%,#b6ccf8 75%,#c8d8f6);border-radius:1px;"></div>
<div class="a" style="left:630.3px;top:31px;width:8.5px;height:9.6px;background:#c3d1fa;border-radius:1px;"><svg class="a" style="left:0;top:0" width="7.8" height="9.6" viewBox="0 0 7.8 9.6"><path d="M1.6,5.6 L3.9,3.2 L6.2,5.6" fill="none" stroke="#3b4d78" stroke-width="1.3"/></svg></div>
<div class="a" style="left:630.3px;top:459.4px;width:8.5px;height:9.4px;background:#c3d1fa;border-radius:1px;"><svg class="a" style="left:0;top:0" width="7.8" height="9.4" viewBox="0 0 7.8 9.4"><path d="M1.6,3.6 L3.9,6 L6.2,3.6" fill="none" stroke="#3b4d78" stroke-width="1.3"/></svg></div>
<!-- horizontal scrollbar -->
<div class="a" style="left:0;top:469.4px;width:640px;height:10.6px;background:#ece9d8;"></div>
<div class="a" style="left:0;top:469.4px;width:629.4px;height:9.4px;background:#f6f5ee;"></div>
<div class="a" style="left:10.5px;top:470.5px;width:604px;height:8.2px;background:linear-gradient(#c6d1fa,#bfcbf8 40%,#b3c3f5);border-radius:1px;"></div>
<div class="a" style="left:0.8px;top:470.5px;width:8px;height:8.2px;background:#c3d0f9;border-radius:1px;"><svg class="a" style="left:0;top:0" width="8" height="8.2" viewBox="0 0 8 8.2"><path d="M5,1.6 L2.6,4.1 L5,6.6" fill="none" stroke="#2f3e60" stroke-width="1.35"/></svg></div>
<div class="a" style="left:618.8px;top:470.5px;width:9.2px;height:8.2px;background:#c3d0f9;border-radius:1px;"><svg class="a" style="left:0;top:0" width="9.2" height="8.2" viewBox="0 0 9.2 8.2"><path d="M3.6,1.6 L6,4.1 L3.6,6.6" fill="none" stroke="#2f3e60" stroke-width="1.35"/></svg></div>
<div class="a" style="left:632.4px;top:205.8px;width:4.2px;height:5.4px;border-top:0.8px solid #eaf0fe;border-bottom:0.8px solid #eaf0fe;background:#bccbf8;border-right:0.6px solid #9fb6e8"></div>
<div class="a" style="left:309.8px;top:471.8px;width:5px;height:4.6px;border-left:0.8px solid #e6edfd;border-top:0.8px solid #e6edfd;background:#bccbf8;border-bottom:0.6px solid #9fb6e8"></div>
<!-- window borders -->
<div class="a" style="left:638.8px;top:16px;width:1.2px;height:464px;background:#b9c9da;"></div>
<div class="a" style="left:0;top:478.7px;width:640px;height:1.3px;background:#1c66e0;"></div>

</body>
</html>
